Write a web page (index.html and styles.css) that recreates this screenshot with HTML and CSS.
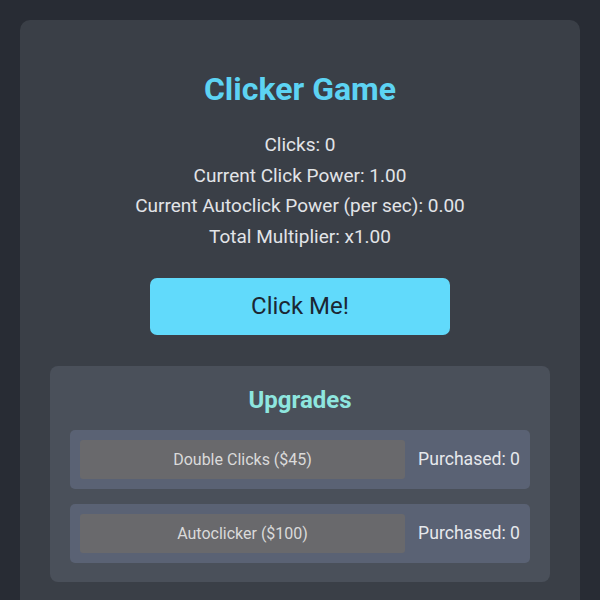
FILE: index.html
```html
<!DOCTYPE html>
<html>
<head>
<meta charset="utf-8">
<link rel="stylesheet" href="styles.css">
</head>
<body>
<div class="card">
  <h1 class="title">Clicker Game</h1>
  <div class="stats">
    <div class="stat">Clicks: 0</div>
    <div class="stat">Current Click Power: 1.00</div>
    <div class="stat">Current Autoclick Power (per sec): 0.00</div>
    <div class="stat">Total Multiplier: x1.00</div>
  </div>
  <button class="click-btn">Click Me!</button>
  <div class="upgrades">
    <h2 class="up-title">Upgrades</h2>
    <div class="row">
      <button class="up-btn">Double Clicks ($45)</button>
      <span class="count">Purchased: 0</span>
    </div>
    <div class="row">
      <button class="up-btn">Autoclicker ($100)</button>
      <span class="count">Purchased: 0</span>
    </div>
  </div>
</div>
</body>
</html>
```
FILE: styles.css
```css
html, body {
  margin: 0;
  padding: 0;
  background: #282c34;
  font-family: Roboto, "Liberation Sans", sans-serif;
  color: #e2e4e8;
}
body {
  padding: 20px;
}
.card {
  background: #3a3f47;
  border-radius: 10px;
  padding: 30px 30px 40px;
  min-height: 600px;
  display: flex;
  flex-direction: column;
  align-items: center;
}
.title {
  margin: 20px 0 0;
  font-size: 32px;
  line-height: 38px;
  font-weight: 700;
  color: #5dd3f3;
}
.stats {
  margin-top: 22px;
  text-align: center;
}
.stat {
  font-size: 19px;
  line-height: 30.7px;
}
.click-btn {
  margin-top: 25px;
  width: 300px;
  height: 57px;
  border: none;
  border-radius: 7px;
  background: #61dafb;
  color: #1b2733;
  font-family: inherit;
  font-size: 24px;
}
.upgrades {
  margin-top: 31px;
  align-self: stretch;
  background: #4a505a;
  border-radius: 8px;
  padding: 19px 20px 19px;
  display: flex;
  flex-direction: column;
  gap: 15px;
}
.up-title {
  margin: 0;
  text-align: center;
  font-size: 24px;
  line-height: 30px;
  font-weight: 700;
  color: #8ee6df;
}
.row {
  background: #5a6274;
  border-radius: 5px;
  padding: 10px;
  display: flex;
  align-items: center;
  gap: 13px;
}
.up-btn {
  flex: 1;
  height: 39px;
  border: none;
  border-radius: 3px;
  background: #69696c;
  color: #dadada;
  font-family: inherit;
  font-size: 16px;
}
.count {
  font-size: 17.6px;
  color: #e6e8ec;
}
```
